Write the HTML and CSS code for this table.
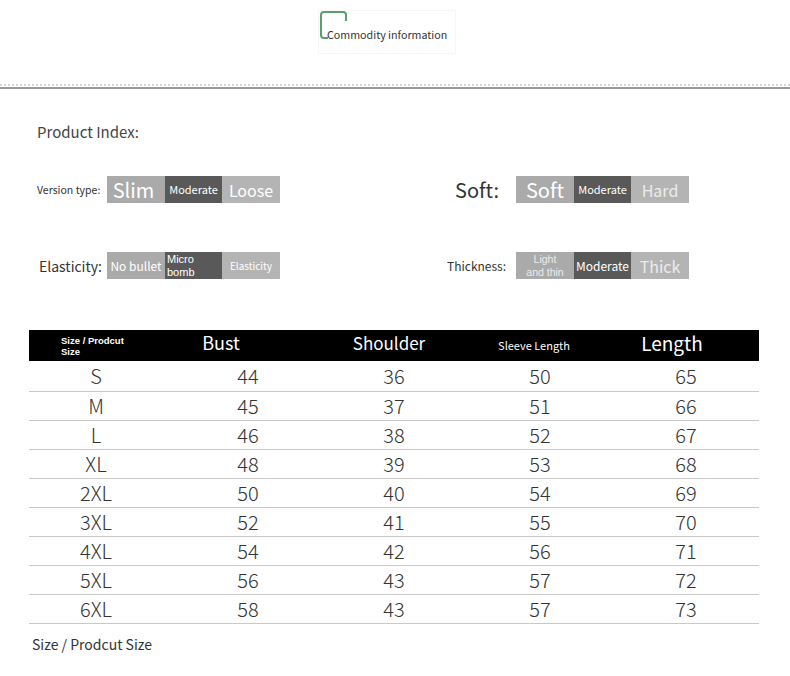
FILE: index.html
```html
<!DOCTYPE html>
<html>
<head>
<meta charset="utf-8">
<link rel="stylesheet" href="styles.css">
</head>
<body>
<header class="top">
  <div class="badge">
    <svg class="bracket" width="30" height="30" viewBox="0 0 30 30">
      <path d="M9 27 H5 Q2 27 2 24 V4 Q2 1 5 1 H24 Q27 1 27 4 V10" fill="none" stroke="#5c9e6c" stroke-width="2"/>
    </svg>
    <span class="badge-text">Commodity information</span>
  </div>
</header>
<div class="rule"></div>

<section class="index">
  <h2 class="index-title">Product Index:</h2>
  <div class="index-grid">
    <div class="item">
      <span class="label label-left lbl-version">Version type:</span>
      <div class="bar">
        <span class="seg light s18">Slim</span>
        <span class="seg dark s11">Moderate</span>
        <span class="seg lighter s16">Loose</span>
      </div>
    </div>
    <div class="item">
      <span class="label label-right lbl-soft">Soft:</span>
      <div class="bar">
        <span class="seg light s19">Soft</span>
        <span class="seg dark s11">Moderate</span>
        <span class="seg lighter s16 dim">Hard</span>
      </div>
    </div>
    <div class="item">
      <span class="label label-left lbl-elastic">Elasticity:</span>
      <div class="bar">
        <span class="seg light s12">No bullet</span>
        <span class="seg dark two left"><span>Micro</span><span>bomb</span></span>
        <span class="seg lighter s10">Elasticity</span>
      </div>
    </div>
    <div class="item">
      <span class="label label-right lbl-thick">Thickness:</span>
      <div class="bar">
        <span class="seg light two dim"><span>Light</span><span>and thin</span></span>
        <span class="seg dark s12">Moderate</span>
        <span class="seg lighter s16 dim">Thick</span>
      </div>
    </div>
  </div>
</section>

<section class="table">
  <div class="thead">
    <div class="th th-size"><span>Size / Prodcut</span><span>Size</span></div>
    <div class="th th-bust">Bust</div>
    <div class="th th-shoulder">Shoulder</div>
    <div class="th th-sleeve">Sleeve Length</div>
    <div class="th th-length">Length</div>
  </div>
  <div class="tr first"><span>S</span><span>44</span><span>36</span><span>50</span><span>65</span></div>
  <div class="tr"><span>M</span><span>45</span><span>37</span><span>51</span><span>66</span></div>
  <div class="tr"><span>L</span><span>46</span><span>38</span><span>52</span><span>67</span></div>
  <div class="tr"><span>XL</span><span>48</span><span>39</span><span>53</span><span>68</span></div>
  <div class="tr"><span>2XL</span><span>50</span><span>40</span><span>54</span><span>69</span></div>
  <div class="tr"><span>3XL</span><span>52</span><span>41</span><span>55</span><span>70</span></div>
  <div class="tr"><span>4XL</span><span>54</span><span>42</span><span>56</span><span>71</span></div>
  <div class="tr"><span>5XL</span><span>56</span><span>43</span><span>57</span><span>72</span></div>
  <div class="tr"><span>6XL</span><span>58</span><span>43</span><span>57</span><span>73</span></div>
</section>

<p class="caption">Size / Prodcut Size</p>
</body>
</html>
```

FILE: styles.css
```css
* { box-sizing: border-box; }
body {
  margin: 0;
  background: #fff;
  font-family: "Noto Sans CJK SC", "Noto Sans", sans-serif;
  color: #333;
  width: 790px;
}
.top {
  height: 84px;
  padding: 10px 0 0 318px;
}
.badge {
  position: relative;
  width: 138px;
  height: 44px;
  border: 1px solid #f7f7f7;
}
.bracket {
  position: absolute;
  left: 0;
  top: 0;
}
.badge-text {
  position: absolute;
  left: 8px;
  top: 16px;
  font-size: 10.7px;
  color: #333;
  white-space: nowrap;
}
.rule {
  height: 5px;
  border-top: 2px dotted #d6d6d6;
  border-bottom: 2px solid #9a9a9a;
}
.index {
  padding: 33px 0 0 37px;
}
.index-title {
  margin: 0;
  font-weight: 400;
  font-size: 15px;
  line-height: 20px;
  color: #444;
}
.index-grid {
  display: grid;
  grid-template-columns: 410px 300px;
  grid-auto-rows: 27px;
  row-gap: 49px;
  margin-top: 34px;
}
.item {
  display: flex;
  align-items: center;
}
.label {
  width: 70px;
  white-space: nowrap;
  color: #333;
}
.label-right { width: 69px; }
.lbl-version { font-size: 10.5px; }
.lbl-elastic { font-size: 14px; padding-left: 2px; }
.lbl-soft { font-size: 20px; padding-left: 8px; }
.lbl-thick { font-size: 12px; }
.bar {
  display: flex;
  height: 27px;
}
.seg {
  width: 58px;
  height: 27px;
  display: flex;
  align-items: center;
  justify-content: center;
  color: #fff;
  white-space: nowrap;
  line-height: 1;
}
.seg.dark { width: 57px; background: #595959; }
.seg.light { background: #aaaaaa; }
.seg.lighter { background: #b4b4b4; }
.seg.dim { color: #ececec; }
.two {
  flex-direction: column;
  font-family: "Liberation Sans", Arial, sans-serif;
  font-size: 10.5px;
}
.two span { display: block; line-height: 12.5px; }
.two.left { align-items: flex-start; padding-left: 2px; font-size: 11px; }
.two.left span { line-height: 13px; }
.s10 { font-size: 10px; }
.s11 { font-size: 11px; }
.s12 { font-size: 12px; }
.s16 { font-size: 16px; }
.s18 { font-size: 20px; padding-right: 5px; }
.s19 { font-size: 20px; }

.table {
  margin: 51px 0 0 29px;
  width: 730px;
}
.thead, .tr {
  display: grid;
  grid-template-columns: repeat(5, 1fr);
  align-items: center;
}
.thead {
  background: #000;
  color: #fff;
  height: 31px;
}
.th {
  text-align: center;
  line-height: 1;
  white-space: nowrap;
}
.th-size {
  display: flex;
  flex-direction: column;
  padding-left: 32px;
  font-family: "Liberation Sans", Arial, sans-serif;
  font-size: 9.5px;
  font-weight: 700;
  text-align: left;
}
.th-size span { display: block; line-height: 11px; }
.th-bust { font-size: 18px; padding-right: 54px; padding-bottom: 7px; }
.th-shoulder { font-size: 17px; padding-right: 10px; padding-bottom: 7px; }
.th-sleeve { font-size: 11px; padding-right: 12px; }
.th-length { font-size: 19px; padding-right: 28px; padding-bottom: 7px; }
.tr {
  height: 29px;
  border-bottom: 1px solid #c9c9c9;
  font-size: 20px;
  font-weight: 300;
  color: #333;
  text-align: center;
}
.tr.first { height: 31px; }
.tr span { line-height: 1; }
.tr span:first-child { padding-right: 12px; }
.caption {
  margin: 10px 0 0 32px;
  font-size: 14px;
  color: #333;
}
```
